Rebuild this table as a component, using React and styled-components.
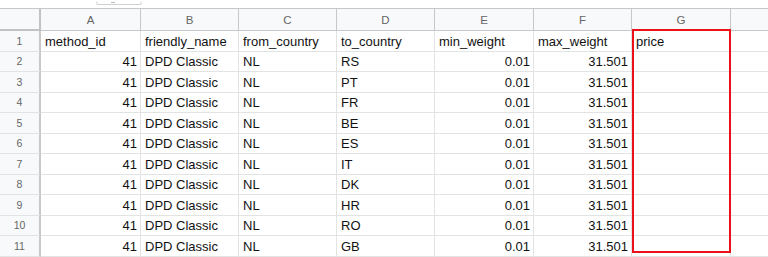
import React from "react";
import styled, { createGlobalStyle } from "styled-components";

const Global = createGlobalStyle`
  html, body { margin: 0; padding: 0; background: #fff; }
  body { font-family: "Liberation Sans", Arial, sans-serif; overflow: hidden; }
`;

const Sheet = styled.div`
  position: relative;
  width: 768px;
  height: 257px;
  overflow: hidden;
  background: #fff;
`;

const TopStrip = styled.div`
  height: 8px;
  border-bottom: 1px solid #c7c7c7;
  position: relative;
  display: flex;
  padding-left: 96px;
`;

const Grid = styled.div`
  display: grid;
  grid-template-columns: 41px 100px 98px 98px 98px 99px 98px 99px 120px;
  grid-template-rows: 22px;
  grid-auto-rows: 20.5px;
  width: 851px;
`;

const Cell = styled.div`
  box-sizing: border-box;
  border-right: 1px solid #e2e3e3;
  border-bottom: 1px solid #e2e3e3;
  display: flex;
  align-items: center;
  justify-content: ${(p) => (p.$num ? "flex-end" : "flex-start")};
  padding: 1px 3px 0 4px;
  font-size: 13px;
  color: #111;
  white-space: nowrap;
  overflow: hidden;
`;

const ColHead = styled.div`
  box-sizing: border-box;
  background: #f8f9fa;
  border-right: 1px solid #c8c8c8;
  border-bottom: 1px solid #c8c8c8;
  display: flex;
  align-items: center;
  justify-content: center;
  font-size: 11.5px;
  color: #666;
`;

const Corner = styled.div`
  box-sizing: border-box;
  background: #f8f9fa;
  border-right: 2px solid #c2c2c2;
  border-bottom: 2px solid #c2c2c2;
`;

const RowHead = styled.div`
  box-sizing: border-box;
  background: #f8f9fa;
  border-right: 2px solid #c8c8c8;
  border-bottom: 1px solid #e2e3e3;
  display: flex;
  align-items: center;
  justify-content: center;
  font-size: 10.5px;
  color: #666;
`;

const Highlight = styled.div`
  position: absolute;
  left: 632px;
  top: 29px;
  width: 99px;
  height: 224px;
  box-sizing: border-box;
  border: 2px solid #ec1118;
  pointer-events: none;
`;

const cols = ["A", "B", "C", "D", "E", "F", "G", ""];
const header = ["method_id", "friendly_name", "from_country", "to_country", "min_weight", "max_weight", "price", ""];
const countries = ["RS", "PT", "FR", "BE", "ES", "IT", "DK", "HR", "RO", "GB"];

export default function App() {
  return (
    <>
      <Global />
      <Sheet>
        <TopStrip>
          <svg width="48" height="8" viewBox="0 0 48 8">
            <path d="M1 1.5 V4.5 H45 V1.5" fill="none" stroke="#d0d0d0" strokeWidth="1" />
            <path d="M15 2.5 H19" stroke="#bdbdbd" strokeWidth="1" />
          </svg>
        </TopStrip>
        <Grid>
          <Corner />
          {cols.map((c, i) => (
            <ColHead key={i}>{c}</ColHead>
          ))}
          <RowHead>1</RowHead>
          {header.map((h, i) => (
            <Cell key={i}>{h}</Cell>
          ))}
          {countries.map((cc, r) => (
            <React.Fragment key={cc}>
              <RowHead>{r + 2}</RowHead>
              <Cell $num>41</Cell>
              <Cell>DPD Classic</Cell>
              <Cell>NL</Cell>
              <Cell>{cc}</Cell>
              <Cell $num>0.01</Cell>
              <Cell $num>31.501</Cell>
              <Cell />
              <Cell />
            </React.Fragment>
          ))}
        </Grid>
        <Highlight />
      </Sheet>
    </>
  );
}
